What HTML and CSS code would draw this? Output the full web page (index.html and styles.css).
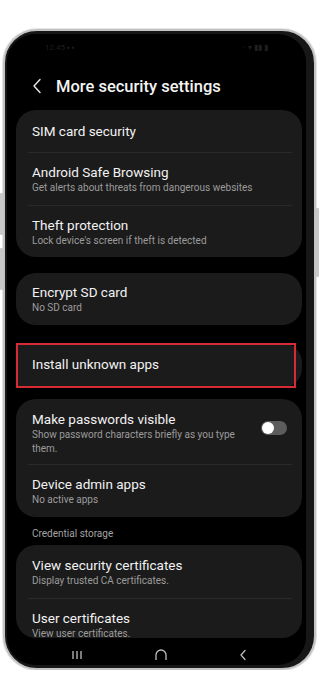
FILE: index.html
```html
<!DOCTYPE html>
<html lang="en">
<head>
<meta charset="utf-8">
<title>More security settings</title>
<link rel="stylesheet" href="styles.css">
</head>
<body>
<div class="phone">
  <span class="btn btn-l1"></span>
  <span class="btn btn-l2"></span>
  <span class="btn btn-r"></span>
  <div class="screen">
    <div class="status">
      <span class="time">12:45 ▪ ▪</span>
      <span class="sicons">◦ ▾ ▮▮ ▮</span>
    </div>
    <div class="header">
      <svg class="back" width="10" height="16" viewBox="0 0 10 16"><path d="M8 1.5 L2 8 L8 14.5" fill="none" stroke="#e8e8e8" stroke-width="1.4" stroke-linecap="round" stroke-linejoin="round"/></svg>
      <h1>More security settings</h1>
    </div>
    <div class="content">
      <section class="card c1">
        <div class="row r42"><div class="title">SIM card security</div></div>
        <div class="row r53"><div class="title">Android Safe Browsing</div><div class="sub">Get alerts about threats from dangerous websites</div></div>
        <div class="row r52"><div class="title">Theft protection</div><div class="sub">Lock device's screen if theft is detected</div></div>
      </section>
      <section class="card c2">
        <div class="row r52"><div class="title">Encrypt SD card</div><div class="sub">No SD card</div></div>
      </section>
      <section class="card c3 highlighted">
        <div class="row r45"><div class="title">Install unknown apps</div></div>
      </section>
      <section class="card c4">
        <div class="row r65 with-toggle">
          <div class="text">
            <div class="title">Make passwords visible</div>
            <div class="sub">Show password characters briefly as you type them.</div>
          </div>
          <span class="toggle"><span class="knob"></span></span>
        </div>
        <div class="row r53"><div class="title">Device admin apps</div><div class="sub">No active apps</div></div>
      </section>
      <div class="label">Credential storage</div>
      <section class="card c5">
        <div class="row r53"><div class="title">View security certificates</div><div class="sub">Display trusted CA certificates.</div></div>
        <div class="row r53"><div class="title">User certificates</div><div class="sub">View user certificates.</div></div>
      </section>
    </div>
    <div class="nav">
      <svg width="12" height="10" viewBox="0 0 12 10"><path d="M2 1v8M6 1v8M10 1v8" stroke="#bdbdbd" stroke-width="1.3" fill="none"/></svg>
      <svg width="14" height="12" viewBox="0 0 14 12"><path d="M2 11V6a5 5 0 0 1 10 0v5" stroke="#bdbdbd" stroke-width="1.3" fill="none"/></svg>
      <svg width="10" height="12" viewBox="0 0 10 12"><path d="M7 1.5 L3 6 L7 10.5" stroke="#bdbdbd" stroke-width="1.3" fill="none" stroke-linecap="round"/></svg>
    </div>
  </div>
</div>
</body>
</html>
```

FILE: styles.css
```css
* { box-sizing: border-box; }
html, body { margin: 0; padding: 0; background: #ffffff; }
body { font-family: Roboto, "Noto Sans", "Liberation Sans", sans-serif; }

.phone {
  position: relative;
  margin: 29px 4px 0 3px;
  height: 641px;
  border: 2px solid #c3c3c3;
  border-radius: 34px;
  background: #171717;
  padding: 3px 8px 3px 2px;
  box-shadow: 0 0 0 1px #e4e4e4;
}
.btn { position: absolute; background: #c8c8c8; border-radius: 1px; width: 3px; }
.btn-l1 { left: -5px; top: 162px; height: 42px; }
.btn-l2 { left: -5px; top: 217px; height: 42px; }
.btn-r { right: -5px; top: 177px; height: 69px; }

.screen {
  height: 100%;
  background: #000;
  border-radius: 28px;
  overflow: hidden;
  display: flex;
  flex-direction: column;
}
.status {
  height: 18px;
  display: flex;
  justify-content: space-between;
  align-items: flex-end;
  padding: 0 38px 0 38px;
  font-size: 8px;
  color: #1f1f1f;
}
.header {
  height: 58px;
  display: flex;
  align-items: center;
  padding: 10px 0 0 25px;
  gap: 14px;
}
.back { display: block; }
.header h1 {
  margin: 0;
  font-size: 16.5px;
  font-weight: 500;
  color: #f4f4f4;
  letter-spacing: 0;
}
.content {
  height: 528px;
  overflow: hidden;
  padding: 0 4px 0 9px;
  display: flex;
  flex-direction: column;
}
.card {
  background: #1b1b1b;
  border-radius: 20px;
  padding: 0 10px 0 12px;
  flex: none;
}
.c2 { margin-top: 16px; }
.c3 { margin-top: 18px; }
.c4 { margin-top: 11px; }
.c5 { height: 93px; overflow: hidden; }
.highlighted { position: relative; border-radius: 0 20px 20px 0; }
.highlighted::after {
  content: "";
  position: absolute;
  left: 0; top: 0; right: 6px; bottom: 0;
  border: 2px solid #d62a35;
}
.row {
  display: flex;
  flex-direction: column;
  justify-content: center;
  padding: 0 5px 0 4px;
}
.row + .row { border-top: 1px solid #2a2a2a; }
.r42 { height: 42px; }
.r45 { height: 45px; padding-bottom: 3px; }
.r52 { height: 52px; }
.r53 { height: 53px; }
.r65 { height: 65px; padding-top: 3px; }
.title {
  font-size: 13.5px;
  line-height: 18px;
  color: #f2f2f2;
}
.sub {
  font-size: 10px;
  line-height: 14px;
  color: #9b9b9b;
}
.with-toggle { flex-direction: row; align-items: center; justify-content: space-between; }
.with-toggle .text { width: 218px; }
.toggle {
  width: 26px; height: 14px;
  border-radius: 7px;
  background: #5c5c5c;
  display: flex; align-items: center;
  padding: 0 1px;
  margin-top: -10px;
}
.knob { width: 12px; height: 12px; border-radius: 50%; background: #fff; }
.label {
  height: 28px;
  padding: 10px 0 0 16px;
  font-size: 10px;
  line-height: 14px;
  color: #a3a3a3;
}
.nav {
  height: 27px;
  display: flex;
  align-items: center;
  justify-content: space-between;
  padding: 6px 58px 0 64px;
}
.nav svg { display: block; }
```
